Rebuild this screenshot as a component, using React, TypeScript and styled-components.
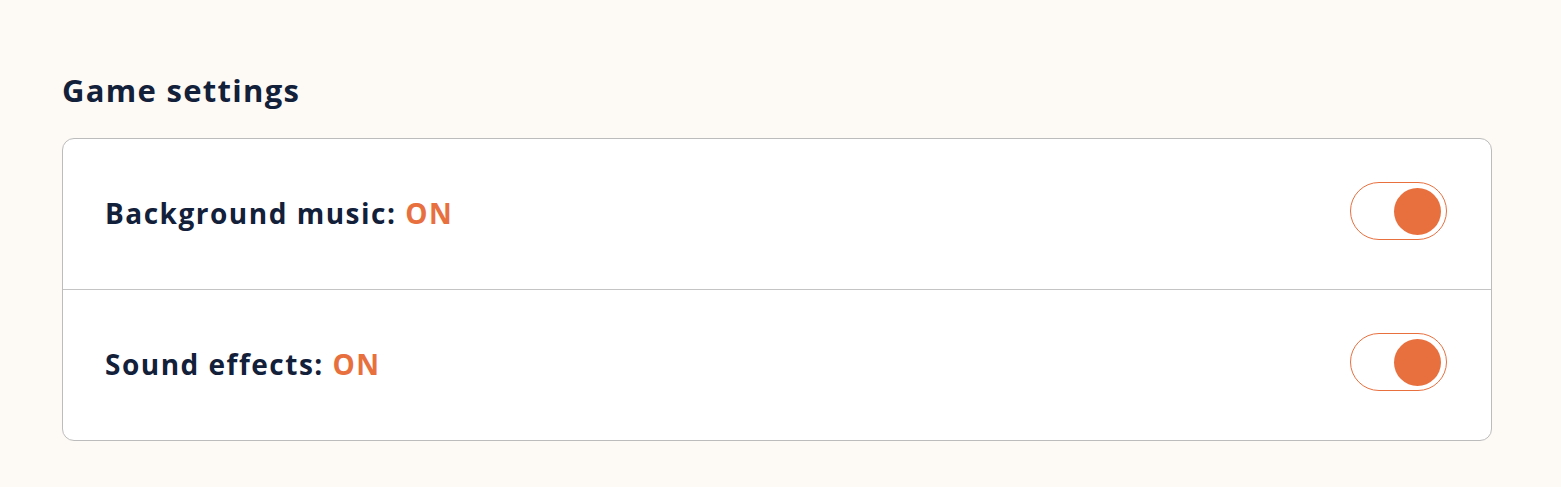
import React from 'react';
import styled, { createGlobalStyle } from 'styled-components';

const GlobalStyle = createGlobalStyle`
  html, body {
    margin: 0;
    padding: 0;
    background: #fdf9f4;
    font-family: "Open Sans", Lato, sans-serif;
  }
`;

const Page = styled.div`
  padding: 70px 69px 46px 62px;
`;

const Title = styled.h2`
  font-size: 31px;
  font-weight: 700;
  letter-spacing: 1.3px;
  color: #13203a;
  margin: 0 0 28px;
  line-height: 40px;
`;

const Card = styled.div`
  background: #fff;
  border: 1px solid #bcbcbc;
  border-radius: 12px;
  overflow: hidden;
`;

const Row = styled.div`
  display: flex;
  align-items: center;
  justify-content: space-between;
  height: 150px;
  padding: 0 44px 0 42px;
  border-bottom: 1px solid #c4c4c4;
  &:last-child { border-bottom: none; }
`;

const Label = styled.span`
  font-size: 28px;
  font-weight: 700;
  letter-spacing: 1.5px;
  color: #13203a;
  margin-top: -2px;
`;

const State = styled.span`
  color: #e8703f;
`;

const Toggle = styled.button<{ $on: boolean }>`
  width: 97px;
  height: 58px;
  border-radius: 29px;
  border: 1px solid #e8703f;
  background: #fff;
  padding: 0 5px;
  display: flex;
  align-items: center;
  justify-content: ${p => (p.$on ? 'flex-end' : 'flex-start')};
  cursor: pointer;
  margin-top: -6px;
`;

const Knob = styled.span`
  width: 47px;
  height: 47px;
  border-radius: 50%;
  background: #e8703f;
`;

const settings = [
  { label: 'Background music', on: true },
  { label: 'Sound effects', on: true },
];

export default function App() {
  return (
    <>
      <GlobalStyle />
      <Page>
        <Title>Game settings</Title>
        <Card>
          {settings.map(s => (
            <Row key={s.label}>
              <Label>
                {s.label}: <State>{s.on ? 'ON' : 'OFF'}</State>
              </Label>
              <Toggle $on={s.on} aria-label={s.label}>
                <Knob />
              </Toggle>
            </Row>
          ))}
        </Card>
      </Page>
    </>
  );
}
